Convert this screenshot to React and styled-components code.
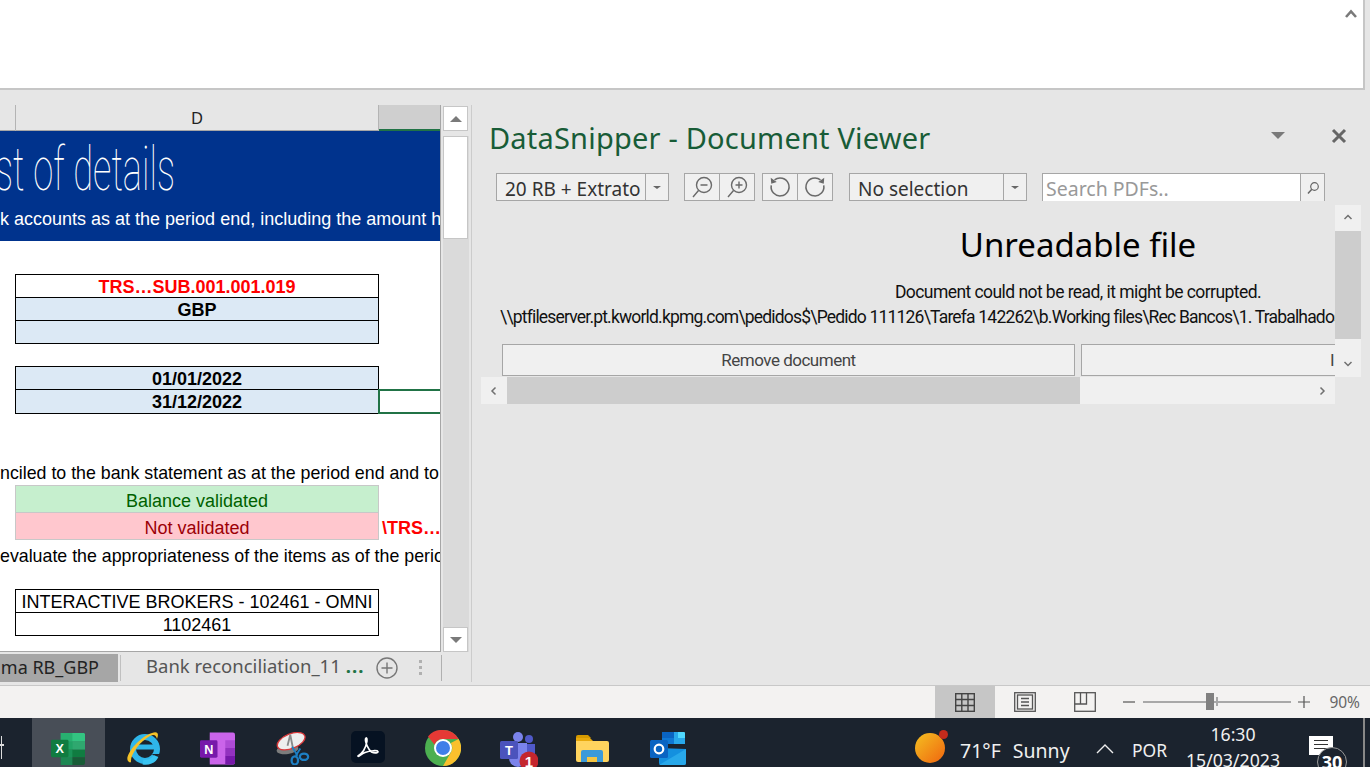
import React from 'react';
import styled, { createGlobalStyle } from 'styled-components';

const GlobalStyle = createGlobalStyle`
  html, body { margin: 0; padding: 0; height: 767px; overflow: hidden; background: #e6e6e6; }
  * { box-sizing: border-box; }
`;

const Page = styled.div`
  width: 1370px;
  height: 767px;
  display: flex;
  flex-direction: column;
  overflow: hidden;
  font-family: "Noto Sans", sans-serif;
`;

const Ribbon = styled.div`
  height: 90px;
  width: 1365px;
  flex: none;
  background: #fff;
  border-bottom: 2px solid #c6c6c6;
  border-right: 2px solid #c6c6c6;
  display: flex;
  justify-content: flex-end;
  padding: 9px 6px 0 0;
  line-height: 0;
`;

const Main = styled.div`
  flex: 1;
  min-height: 0;
  display: flex;
  background: #e6e6e6;
`;

const ExcelPane = styled.div`
  width: 472px;
  flex: none;
  margin: 15px 0 3px;
  display: grid;
  grid-template-columns: 441px 1fr;
  grid-template-rows: 1fr 30px;
  border-right: 1px solid #cccccc;
`;

const SheetArea = styled.div`
  display: flex;
  flex-direction: column;
  min-width: 0;
  overflow: hidden;
  border-right: 1px solid #a6a6a6;
  border-bottom: 1px solid #a6a6a6;
`;

const ColHeader = styled.div`
  height: 26px;
  flex: none;
  display: grid;
  grid-template-columns: 15px 363px 1fr;
  border-bottom: 1px solid #a6a6a6;
`;

const ColCell = styled.div`
  font: 16px/28px "Liberation Sans", sans-serif;
  text-align: center;
  color: #222;
  border-left: ${p => (p.$lined ? '1px solid #b4b4b4' : '0')};
  background: ${p => (p.$active ? '#cfcfcf' : 'transparent')};
  box-shadow: ${p => (p.$active ? 'inset 0 -2px 0 #217346' : 'none')};
  height: 26px;
`;

const Sheet = styled.div`
  flex: 1;
  min-height: 0;
  background: #fff;
  overflow: hidden;
  font: 18px/23px "Liberation Sans", sans-serif;
  color: #000;
`;

const Banner = styled.div`
  height: 110px;
  background: #00338d;
  color: #fff;
  overflow: hidden;
`;

const BannerTitle = styled.div`
  height: 70px;
  font: 100 62px/76px "Roboto", sans-serif;
  white-space: nowrap;
  transform: scaleX(0.585);
  transform-origin: left top;
  margin-left: -5px;
`;

const BannerLine = styled.div`
  font: 18px/36px "Liberation Sans", sans-serif;
  white-space: nowrap;
`;

const Row = styled.div`
  display: grid;
  grid-template-columns: 15px 364px 1fr;
  height: ${p => p.$h || 23}px;
  margin-top: ${p => p.$top || 0}px;
`;

const Cell = styled.div`
  grid-column: 2;
  text-align: center;
  white-space: nowrap;
  overflow: hidden;
  background: ${p => p.$bg || '#fff'};
  color: ${p => p.$color || '#000'};
  font-weight: ${p => (p.$bold ? 700 : 400)};
  border: 1px solid ${p => p.$line || '#000'};
  border-top-width: ${p => (p.$first ? 1 : 0)}px;
  line-height: ${p => p.$lh || 24}px;
`;

const Selected = styled.div`
  grid-column: 3;
  border: 2px solid #217346;
  border-right: 0;
  margin-left: -1px;
  margin-top: -1px;
  height: 25px;
`;

const Overflowing = styled.div`
  grid-column: 3;
  color: #f00;
  font-weight: 700;
  white-space: nowrap;
  overflow: hidden;
  padding-left: 3px;
  line-height: 31px;
`;

const TextLine = styled.div`
  height: 23px;
  margin-top: ${p => p.$top || 0}px;
  font-size: 17.8px;
  line-height: 25px;
  white-space: nowrap;
  overflow: hidden;
`;

const VScroll = styled.div`
  grid-row: 1;
  grid-column: 2;
  padding: 1px 3px 0 2px;
  display: flex;
  flex-direction: column;
  gap: 5px;
`;

const VTrack = styled.div`
  flex: 1;
  width: 26px;
  background: #dadada;
  display: flex;
  flex-direction: column;
`;

const TrackGap = styled.div`
  flex: 1;
`;

const ScrollBtn = styled.div`
  width: 25px;
  height: 25px;
  flex: none;
  background: #fff;
  border: 1px solid #c6c6c6;
  display: flex;
  align-items: center;
  justify-content: center;
`;

const Thumb = styled.div`
  width: 25px;
  height: 103px;
  background: #fff;
  border: 1px solid #c6c6c6;
`;

const Triangle = styled.span`
  width: 0;
  height: 0;
  border-left: ${p => p.$s || 6}px solid transparent;
  border-right: ${p => p.$s || 6}px solid transparent;
  border-top: ${p => (p.$up ? 0 : `${p.$t || 6}px solid ${p.$c || '#7a7a7a'}`)};
  border-bottom: ${p => (p.$up ? `${p.$t || 6}px solid ${p.$c || '#7a7a7a'}` : 0)};
`;

const Tabs = styled.div`
  grid-row: 2;
  grid-column: 1 / 3;
  display: flex;
  align-items: flex-start;
`;

const ActiveTab = styled.div`
  width: 118px;
  height: 28px;
  background: #a6a6a6;
  color: #222;
  font: 18px/26px "Noto Sans", sans-serif;
  text-align: right;
  padding-right: 19px;
  white-space: nowrap;
  overflow: hidden;
  margin-top: 2px;
`;

const TabSep = styled.div`
  width: 1px;
  height: 26px;
  background: #c0c0c0;
  margin: 3px 0 0 2px;
`;

const Tab = styled.div`
  margin-left: 25px;
  width: 216px;
  font: 18.5px/26px "Noto Sans", sans-serif;
  color: #555;
  white-space: nowrap;
  padding-top: 1px;
  display: flex;
  gap: 5px;
`;

const Dots = styled.b`
  color: #217346;
  letter-spacing: 1px;
`;

const TabAdd = styled.div`
  margin: 5px 0 0 14px;
  line-height: 0;
`;

const VDots = styled.div`
  margin: 8px 0 0 21px;
  display: flex;
  flex-direction: column;
  gap: 3px;
  span { width: 3px; height: 3px; background: #b0b0b0; display: block; }
`;

const TabEnd = styled.div`
  width: 1px;
  height: 26px;
  background: #b0b0b0;
  margin: 3px 0 0 19px;
`;

const Viewer = styled.div`
  flex: 1;
  min-width: 0;
  display: flex;
  flex-direction: column;
  padding-top: 25px;
`;

const ViewerHead = styled.div`
  height: 45px;
  flex: none;
  display: flex;
  align-items: center;
  padding: 0 23px 0 17px;
  margin-top: -2px;
`;

const ViewerTitle = styled.div`
  flex: 1;
  font: 29px/40px "Noto Sans", sans-serif;
  padding-top: 4px;
  color: #185c37;
  letter-spacing: 0.2px;
`;

const HeadBtns = styled.div`
  display: flex;
  align-items: center;
  gap: 46px;
`;

const Toolbar = styled.div`
  display: flex;
  align-items: flex-start;
  height: 28px;
  padding-left: 24px;
  margin-top: 15px;
  flex: none;
`;

const Combo = styled.div`
  width: ${p => p.$w}px;
  height: 28px;
  margin-left: ${p => p.$ml || 0}px;
  display: flex;
  background: #f0f0f0;
  border: 1px solid #a6a6a6;
  font: 19px/31px "Noto Sans", sans-serif;
  color: #333;
  white-space: nowrap;
`;

const ComboText = styled.div`
  flex: 1;
  padding-left: 8px;
  overflow: hidden;
`;

const ComboArrow = styled.div`
  width: 23px;
  flex: none;
  border-left: 1px solid #a6a6a6;
  display: flex;
  align-items: center;
  justify-content: center;
`;

const IconGroup = styled.div`
  display: flex;
  margin-left: ${p => p.$ml}px;
`;

const IconBtn = styled.div`
  width: 36px;
  height: 28px;
  background: #f0f0f0;
  border: 1px solid #a6a6a6;
  margin-left: ${p => (p.$joined ? -1 : 0)}px;
  display: flex;
  align-items: center;
  justify-content: center;
`;

const Search = styled.div`
  width: 283px;
  height: 28px;
  margin-left: 15px;
  display: flex;
  background: #fff;
  border: 1px solid #a6a6a6;
  border-bottom: 0;
  font: 19.5px/29px "Noto Sans", sans-serif;
  color: #999;
`;

const SearchText = styled.div`
  flex: 1;
  padding-left: 3px;
`;

const SearchBtn = styled.div`
  width: 24px;
  background: #f0f0f0;
  border-left: 1px solid #a6a6a6;
  display: flex;
  align-items: center;
  justify-content: center;
`;

const DocPane = styled.div`
  width: 888px;
  height: 199px;
  margin: 4px 0 0 9px;
  display: grid;
  grid-template-columns: 854px 1fr;
  grid-template-rows: 1fr 27px;
  overflow: hidden;
`;

const DocBody = styled.div`
  overflow: hidden;
  text-align: center;
  color: #111;
`;

const DocTitle = styled.div`
  font: 33px/44px "Noto Sans", sans-serif;
  color: #000;
  margin-top: 18px;
  width: 1194px;
`;

const DocLine = styled.div`
  font: 17.5px/26px "Roboto", sans-serif;
  letter-spacing: -0.56px;
  width: 1194px;
  white-space: nowrap;
  margin-top: ${p => p.$top || 0}px;
`;

const PathLine = styled(DocLine)`
  text-align: left;
  padding-left: 19px;
  letter-spacing: -0.81px;
  line-height: 25px;
`;

const DocButtons = styled.div`
  display: flex;
  gap: 6px;
  margin: 14px 0 0 21px;
  width: 1200px;
`;

const DocButton = styled.div`
  width: ${p => p.$w}px;
  height: 32px;
  background: #f0f0f0;
  border: 1px solid #a6a6a6;
  font: 17px/30px "Roboto", sans-serif;
  letter-spacing: -0.5px;
  color: #444;
  text-align: ${p => p.$align || 'center'};
  padding-left: ${p => p.$pl || 0}px;
`;

const DocVScroll = styled.div`
  background: #f0f0f0;
  display: flex;
  flex-direction: column;
  align-items: center;
  width: 26px;
`;

const DocVBtn = styled.div`
  height: 26px;
  width: 100%;
  flex: none;
  display: flex;
  align-items: center;
  justify-content: center;
`;

const DocVThumb = styled.div`
  height: 108px;
  width: 100%;
  flex: none;
  background: #cdcdcd;
`;

const DocHScroll = styled.div`
  display: flex;
  background: #f0f0f0;
  align-items: stretch;
`;

const DocHBtn = styled.div`
  width: 26px;
  flex: none;
  display: flex;
  align-items: center;
  justify-content: center;
`;

const DocHThumb = styled.div`
  width: 573px;
  background: #cdcdcd;
  flex: none;
`;

const StatusBar = styled.div`
  height: 33px;
  flex: none;
  background: #f3f2f1;
  border-top: 1px solid #c8c8c8;
  display: flex;
  align-items: center;
  justify-content: flex-end;
  padding-right: 10px;
`;

const ViewBtn = styled.div`
  width: 60px;
  height: 32px;
  background: ${p => (p.$on ? '#c6c6c6' : 'transparent')};
  display: flex;
  align-items: center;
  justify-content: center;
`;

const ZoomBar = styled.div`
  display: flex;
  align-items: center;
  margin-left: 8px;
  width: 192px;
  color: #555;
`;

const ZoomTrack = styled.div`
  position: relative;
  width: 148px;
  height: 2px;
  background: #a8a8a8;
  margin: 0 7px 0 8px;
`;

const ZoomThumb = styled.span`
  position: absolute;
  left: 63px;
  top: -8px;
  width: 8px;
  height: 17px;
  background: #808080;
`;

const ZoomTick = styled.span`
  position: absolute;
  left: 73px;
  top: -4px;
  width: 2px;
  height: 9px;
  background: #a8a8a8;
`;

const ZoomValue = styled.div`
  font: 15.5px/20px "Noto Sans", sans-serif;
  color: #666;
  margin-left: 14px;
`;

const Taskbar = styled.div`
  height: 49px;
  flex: none;
  background: #1b232e;
  display: flex;
  align-items: flex-start;
  overflow: hidden;
  color: #f0f0f0;
`;

const TaskEdge = styled.div`
  width: 32px;
  height: 49px;
  flex: none;
  padding: 18px 0 0 1px;
`;

const EdgeGlyph = styled.span`
  position: relative;
  display: block;
  width: 1px;
  height: 23px;
  background: #ddd;
  &::after {
    content: '';
    position: absolute;
    left: -1px;
    top: 8px;
    width: 4px;
    height: 2px;
    background: #ddd;
  }
`;

const TaskIcons = styled.div`
  display: flex;
`;

const TaskIcon = styled.div`
  width: ${p => (p.$on ? 73 : 75)}px;
  height: 49px;
  padding-top: ${p => p.$pt ?? 14}px;
  display: flex;
  justify-content: center;
  background: ${p => (p.$on ? '#484e57' : 'transparent')};
`;

const Tray = styled.div`
  margin-left: auto;
  display: flex;
  align-items: flex-start;
  height: 49px;
  font: 19.5px/26px "Noto Sans", sans-serif;
`;

const Sun = styled.div`
  position: relative;
  margin-top: 15px;
  width: 30px;
  height: 30px;
  border-radius: 50%;
  background: linear-gradient(135deg, #f4c021, #f0650f);
`;

const SunDot = styled.span`
  position: absolute;
  right: -3px;
  top: -3px;
  width: 9px;
  height: 9px;
  border-radius: 50%;
  background: #c42b1c;
`;

const Weather = styled.div`
  margin: 20px 0 0 15px;
  display: flex;
  gap: 12px;
  width: 136px;
`;

const Chevron = styled.div`
  width: 28px;
  margin-top: 25px;
  line-height: 0;
`;

const Lang = styled.div`
  margin: 19px 0 0 8px;
  width: 51px;
  font-size: 17.5px;
`;

const Clock = styled.div`
  width: 100px;
  text-align: center;
  font-size: 17.7px;
  line-height: 26px;
  margin-top: 3px;
`;

const Notify = styled.div`
  position: relative;
  margin: 18px 0 0 26px;
  width: 24px;
  height: 19px;
  background: #fff;
`;

const NotifyLines = styled.div`
  display: flex;
  flex-direction: column;
  gap: 3px;
  padding: 4px 5px 0;
  span { display: block; height: 1px; background: #333; }
`;

const NotifyBadge = styled.div`
  position: absolute;
  left: 8px;
  top: 11px;
  width: 30px;
  height: 30px;
  border-radius: 50%;
  background: #1b232e;
  border: 1px solid #999;
  font: 700 18px/28px "Noto Sans", sans-serif;
  text-align: center;
  color: #fff;
`;

const DesktopEdge = styled.div`
  width: 2px;
  height: 49px;
  background: #888;
  margin: 0 5px 0 30px;
`;

const ZoomOutIcon = () => (
  <svg width="24" height="24" viewBox="0 0 24 24" fill="none" stroke="#6a6a6a" strokeWidth="1.4">
    <circle cx="14" cy="10" r="7.5" />
    <path d="M8.5 15.5 3 22M10.500 10h7" />
  </svg>
);

const ZoomInIcon = () => (
  <svg width="24" height="24" viewBox="0 0 24 24" fill="none" stroke="#6a6a6a" strokeWidth="1.4">
    <circle cx="14" cy="10" r="7.5" />
    <path d="M8.5 15.5 3 22M10.500 10h7M14 6.500v7" />
  </svg>
);

const RotateLeft = () => (
  <svg width="24" height="24" viewBox="0 0 22 22" fill="none" stroke="#6a6a6a" strokeWidth="1.4">
    <path d="M6 4.500a8.200 8.200 0 1 1-3 5" />
    <path d="M2.500 2.500 3 8l5-1.500z" fill="#6a6a6a" stroke="none" />
  </svg>
);

const RotateRight = () => (
  <svg width="24" height="24" viewBox="0 0 22 22" fill="none" stroke="#6a6a6a" strokeWidth="1.4">
    <path d="M16 4.500a8.200 8.200 0 1 0 3 5" />
    <path d="M19.500 2.500 19 8l-5-1.500z" fill="#6a6a6a" stroke="none" />
  </svg>
);

const SearchIcon = () => (
  <svg width="14" height="14" viewBox="0 0 14 14" fill="none" stroke="#666" strokeWidth="1.2">
    <circle cx="8.500" cy="5.500" r="3.800" />
    <path d="M5.800 8.300 2 12.500" strokeWidth="1.500" />
  </svg>
);

const Caret = ({ dir }) => {
  const paths = { up: 'M1.500 6 5 2.500 8.500 6', down: 'M1.500 3 5 6.500 8.500 3', left: 'M6.500 1.500 3 5l3.500 3.500', right: 'M3.500 1.500 7 5 3.500 8.500' };
  return (
    <svg width="10" height="10" viewBox="0 0 10 10" fill="none" stroke="#707070" strokeWidth="1.500">
      <path d={paths[dir]} />
    </svg>
  );
};

const ExcelLogo = () => (
  <svg width="35" height="33" viewBox="0 0 36 34">
    <path d="M10 1h24a2 2 0 0 1 1 1v8H10z" fill="#33c481" />
    <path d="M10 10h25v8H10z" fill="#21a366" />
    <path d="M10 18h25v8H10z" fill="#107c41" />
    <path d="M22 10h13v8H22z" fill="#2fa86f" />
    <path d="M10 26h25v6a2 2 0 0 1-2 2H10z" fill="#185c37" />
    <path d="M10 1h12v33H10z" fill="#21a366" opacity=".6" />
    <rect x="0" y="8" width="18" height="18" rx="1.500" fill="#107c41" />
    <text x="9" y="22" fontSize="13" fontWeight="700" fill="#fff" textAnchor="middle" fontFamily="Liberation Sans">X</text>
  </svg>
);

const IeLogo = () => (
  <svg width="36" height="36" viewBox="0 0 36 36" fill="none">
    <circle cx="20" cy="19" r="12" stroke="#2fb6ea" strokeWidth="6" />
    <path d="M9 17h22" stroke="#2fb6ea" strokeWidth="5" />
    <path d="M27 24h8l-4 5z" fill="#1b232e" />
    <path d="M31 26c-2 5-8 7-13 6" stroke="#39c4f2" strokeWidth="5" />
    <path d="M3 31C-1 26 14 7 27 3c6-2 7 1 5 6-1-4-3-5-7-3C15 11 5 25 6 32c-1 1-2 0-3-1z" fill="#f5c228" />
  </svg>
);

const OneNoteLogo = () => (
  <svg width="35" height="33" viewBox="0 0 36 33">
    <path d="M10 0h24a2 2 0 0 1 2 2v29a2 2 0 0 1-2 2H10z" fill="#ca64ea" />
    <path d="M26 8h10v8H26z" fill="#ae4bd5" />
    <path d="M26 16h10v8H26z" fill="#9332bf" />
    <path d="M26 24h10v7a2 2 0 0 1-2 2h-8z" fill="#7719aa" />
    <rect x="0" y="8" width="18" height="18" rx="1.500" fill="#7719aa" />
    <text x="9" y="22" fontSize="13" fontWeight="700" fill="#fff" textAnchor="middle" fontFamily="Liberation Sans">N</text>
  </svg>
);

const SnipLogo = () => (
  <svg width="34" height="33" viewBox="0 0 36 36" fill="none">
    <ellipse cx="12" cy="19" rx="12" ry="5" transform="rotate(-8 12 19)" fill="#7c7c7c" />
    <ellipse cx="16" cy="10" rx="16" ry="8" transform="rotate(-22 16 10)" fill="#eeeeee" stroke="#d8383a" strokeWidth="1.500" />
    <path d="M15 3l3 15M15 3l-3 12" stroke="#8a8a8a" strokeWidth="2" />
    <path d="M17 16l6 10M26 18l-5 8" stroke="#1d7fc4" strokeWidth="2" />
    <ellipse cx="20" cy="31" rx="3.500" ry="4.500" stroke="#1d7fc4" strokeWidth="2.500" />
    <ellipse cx="30" cy="27" rx="4.500" ry="3.500" stroke="#1d7fc4" strokeWidth="2.500" />
  </svg>
);

const AcrobatLogo = () => (
  <svg width="34" height="32" viewBox="0 0 34 32" fill="none">
    <rect width="34" height="32" rx="5" fill="#061222" />
    <path d="M7 25c5-3 8-9 9-15 .3-3-1-4-1.500-2-.6 3 3 11 6 13 3 1.500 7 1 6.500-.5-.5-1.500-8-1-13 1-4 1.500-7 5-7 3.500z" stroke="#fff" strokeWidth="1.600" />
  </svg>
);

const ChromeLogo = () => (
  <svg width="36" height="36" viewBox="0 0 36 36">
    <circle cx="18" cy="18" r="18" fill="#4caf50" />
    <path d="M18 0a18 18 0 0 1 15.600 9H18a9 9 0 0 0-8.400 5.700L3 6.500A18 18 0 0 1 18 0z" fill="#e53935" />
    <path d="M33.600 9A18 18 0 0 1 18 36l7.800-13.500A9 9 0 0 0 25.800 13z" fill="#fbc02d" />
    <circle cx="18" cy="18" r="9" fill="#fff" />
    <circle cx="18" cy="18" r="7" fill="#3f7fe8" />
  </svg>
);

const TeamsLogo = () => (
  <svg width="40" height="38" viewBox="-2 0 40 38">
    <circle cx="29" cy="7" r="4" fill="#5059c9" />
    <circle cx="18" cy="5" r="5" fill="#7b83eb" />
    <path d="M24 12h11v13a6 6 0 0 1-11 2z" fill="#5059c9" />
    <path d="M9 11h18v15a9 9 0 0 1-18 0z" fill="#7b83eb" />
    <rect x="0" y="9" width="18" height="18" rx="1.500" fill="#4b53bc" />
    <text x="9" y="23" fontSize="13" fontWeight="700" fill="#fff" textAnchor="middle" fontFamily="Liberation Sans">T</text>
    <circle cx="29" cy="29" r="9.500" fill="#c4262e" />
    <text x="29" y="35" fontSize="15" fontWeight="700" fill="#fff" textAnchor="middle" fontFamily="Liberation Sans">1</text>
  </svg>
);

const FolderLogo = () => (
  <svg width="33" height="27" viewBox="0 0 33 27">
    <path d="M0 2a2 2 0 0 1 2-2h10l3 3h-15z" fill="#d69a00" />
    <path d="M0 3h14l3 3H0z" fill="#e8a90c" />
    <path d="M0 6h31a2 2 0 0 1 2 2v17a2 2 0 0 1-2 2H2a2 2 0 0 1-2-2z" fill="#ffd45e" />
    <path d="M5 27V17a2 2 0 0 1 2-2h18a2 2 0 0 1 2 2v10h-6v-5H11v5z" fill="#3b9ad9" />
    <path d="M11 22h10v5H11z" fill="#f5c542" />
  </svg>
);

const OutlookLogo = () => (
  <svg width="36" height="33" viewBox="0 0 36 33">
    <path d="M12 0h22v11H12z" fill="#0a64c2" />
    <path d="M24 0h10v6H24z" fill="#28a8ea" />
    <path d="M28 0h6a1 1 0 0 1 1 1v5h-7z" fill="#50d9ff" />
    <path d="M24 6h11v6H24z" fill="#28a8ea" />
    <path d="M12 6h12v6H12z" fill="#0f78d4" />
    <path d="M9 16 36 17v14a2 2 0 0 1-2 2H11a2 2 0 0 1-2-2z" fill="#1490df" />
    <path d="M9 33 36 17v14a2 2 0 0 1-2 2z" fill="#28a8ea" />
    <rect x="0" y="8" width="18" height="18" rx="1.500" fill="#0a64c2" />
    <circle cx="9" cy="17" r="4.300" fill="none" stroke="#fff" strokeWidth="2.200" />
  </svg>
);

const NormalViewIcon = () => (
  <svg width="20" height="19" viewBox="0 0 20 19" fill="none" stroke="#444" strokeWidth="1.400">
    <rect x=".7" y=".7" width="18.600" height="17.600" />
    <path d="M.7 6.500h18.600M.7 12.500h18.600M6.800.7v17.600M13 .7v17.600" />
  </svg>
);

const PageLayoutIcon = () => (
  <svg width="22" height="20" viewBox="0 0 22 20" fill="none" stroke="#555" strokeWidth="1.300">
    <rect x=".7" y=".7" width="20.600" height="18.600" />
    <rect x="3.500" y="3" width="15" height="14" />
    <path d="M7 6.500h8M7 10h8M7 13.500h8" />
  </svg>
);

const PageBreakIcon = () => (
  <svg width="22" height="20" viewBox="0 0 22 20" fill="none" stroke="#555" strokeWidth="1.300">
    <rect x=".7" y=".7" width="20.600" height="18.600" />
    <path d="M.7 12h11.800V.7M6.500.7V12" />
  </svg>
);

export default function App() {
  return (
    <Page>
      <GlobalStyle />
      <Ribbon>
        <svg width="12" height="9" viewBox="0 0 12 9" fill="none" stroke="#7a7a7a" strokeWidth="2.600">
          <path d="M1 8 6 2.500 11 8" />
        </svg>
      </Ribbon>
      <Main>
        <ExcelPane>
          <SheetArea>
            <ColHeader>
              <ColCell />
              <ColCell $lined>D</ColCell>
              <ColCell $lined $active />
            </ColHeader>
            <Sheet>
              <Banner>
                <BannerTitle>st of details</BannerTitle>
                <BannerLine>k accounts as at the period end, including the amount held</BannerLine>
              </Banner>
              <Row $top={33} $h={24}>
                <Cell $first $bold $color="#f00">TRS…SUB.001.001.019</Cell>
              </Row>
              <Row>
                <Cell $bold $bg="#dce9f5">GBP</Cell>
              </Row>
              <Row>
                <Cell $bg="#dce9f5" />
              </Row>
              <Row $top={22} $h={24}>
                <Cell $first $bold $bg="#dce9f5">01/01/2022</Cell>
              </Row>
              <Row>
                <Cell $bold $bg="#dce9f5">31/12/2022</Cell>
                <Selected />
              </Row>
              <TextLine $top={48}>nciled to the bank statement as at the period end and to reconcile</TextLine>
              <Row $h={28} $top={1}>
                <Cell $first $bg="#c6efce" $color="#006100" $line="#c8c8c8" $lh={31}>Balance validated</Cell>
              </Row>
              <Row $h={27}>
                <Cell $bg="#ffc7ce" $color="#9c0006" $line="#c8c8c8" $lh={31}>Not validated</Cell>
                <Overflowing>\TRS…</Overflowing>
              </Row>
              <TextLine $top={4}>evaluate the appropriateness of the items as of the period end</TextLine>
              <Row $top={22} $h={24}>
                <Cell $first>INTERACTIVE BROKERS - 102461 - OMNI</Cell>
              </Row>
              <Row>
                <Cell>1102461</Cell>
              </Row>
            </Sheet>
          </SheetArea>
          <VScroll>
            <ScrollBtn><Triangle $up /></ScrollBtn>
            <VTrack>
              <Thumb />
              <TrackGap />
              <ScrollBtn><Triangle /></ScrollBtn>
            </VTrack>
          </VScroll>
          <Tabs>
            <ActiveTab>ma RB_GBP</ActiveTab>
            <TabSep />
            <Tab>Bank reconciliation_11 <Dots>...</Dots></Tab>
            <TabAdd>
              <svg width="22" height="22" viewBox="0 0 22 22" fill="none" stroke="#777" strokeWidth="1.400">
                <circle cx="11" cy="11" r="10" />
                <path d="M11 5.500v11M5.500 11h11" />
              </svg>
            </TabAdd>
            <VDots><span /><span /><span /></VDots>
            <TabEnd />
          </Tabs>
        </ExcelPane>
        <Viewer>
          <ViewerHead>
            <ViewerTitle>DataSnipper - Document Viewer</ViewerTitle>
            <HeadBtns>
              <Triangle $s={7} $t={7} />
              <svg width="16" height="16" viewBox="0 0 16 16" stroke="#666" strokeWidth="3">
                <path d="M2 2l12 12M14 2 2 14" />
              </svg>
            </HeadBtns>
          </ViewerHead>
          <Toolbar>
            <Combo $w={173}>
              <ComboText>20 RB + Extrato</ComboText>
              <ComboArrow><Triangle $s={4} $t={3} $c="#666" /></ComboArrow>
            </Combo>
            <IconGroup $ml={15}>
              <IconBtn><ZoomOutIcon /></IconBtn>
              <IconBtn $joined><ZoomInIcon /></IconBtn>
            </IconGroup>
            <IconGroup $ml={7}>
              <IconBtn><RotateLeft /></IconBtn>
              <IconBtn $joined><RotateRight /></IconBtn>
            </IconGroup>
            <Combo $w={178} $ml={16}>
              <ComboText>No selection</ComboText>
              <ComboArrow><Triangle $s={4} $t={3} $c="#666" /></ComboArrow>
            </Combo>
            <Search>
              <SearchText>Search PDFs..</SearchText>
              <SearchBtn><SearchIcon /></SearchBtn>
            </Search>
          </Toolbar>
          <DocPane>
            <DocBody>
              <DocTitle>Unreadable file</DocTitle>
              <DocLine $top={12}>Document could not be read, it might be corrupted.</DocLine>
              <PathLine>\\ptfileserver.pt.kworld.kpmg.com\pedidos$\Pedido 111126\Tarefa 142262\b.Working files\Rec Bancos\1. Trabalhados\20 RB + Extrato.pdf</PathLine>
              <DocButtons>
                <DocButton $w={573}>Remove document</DocButton>
                <DocButton $w={400} $align="left" $pl={248}>I</DocButton>
              </DocButtons>
            </DocBody>
            <DocVScroll>
              <DocVBtn><Caret dir="up" /></DocVBtn>
              <DocVThumb />
              <TrackGap />
              <DocVBtn><Caret dir="down" /></DocVBtn>
            </DocVScroll>
            <DocHScroll>
              <DocHBtn><Caret dir="left" /></DocHBtn>
              <DocHThumb />
              <TrackGap />
              <DocHBtn><Caret dir="right" /></DocHBtn>
            </DocHScroll>
          </DocPane>
        </Viewer>
      </Main>
      <StatusBar>
        <ViewBtn $on><NormalViewIcon /></ViewBtn>
        <ViewBtn><PageLayoutIcon /></ViewBtn>
        <ViewBtn><PageBreakIcon /></ViewBtn>
        <ZoomBar>
          <svg width="12" height="12" viewBox="0 0 12 12" stroke="#555" strokeWidth="1.200"><path d="M0 6h12" /></svg>
          <ZoomTrack>
            <ZoomThumb />
            <ZoomTick />
          </ZoomTrack>
          <svg width="12" height="12" viewBox="0 0 12 12" stroke="#555" strokeWidth="1.200"><path d="M0 6h12M6 0v12" /></svg>
        </ZoomBar>
        <ZoomValue>90%</ZoomValue>
      </StatusBar>
      <Taskbar>
        <TaskEdge><EdgeGlyph /></TaskEdge>
        <TaskIcons>
          <TaskIcon $on><ExcelLogo /></TaskIcon>
          <TaskIcon $pt={12}><IeLogo /></TaskIcon>
          <TaskIcon><OneNoteLogo /></TaskIcon>
          <TaskIcon><SnipLogo /></TaskIcon>
          <TaskIcon $pt={13}><AcrobatLogo /></TaskIcon>
          <TaskIcon $pt={12}><ChromeLogo /></TaskIcon>
          <TaskIcon><TeamsLogo /></TaskIcon>
          <TaskIcon $pt={17}><FolderLogo /></TaskIcon>
          <TaskIcon><OutlookLogo /></TaskIcon>
        </TaskIcons>
        <Tray>
          <Sun><SunDot /></Sun>
          <Weather><span>71°F</span><span>Sunny</span></Weather>
          <Chevron>
            <svg width="18" height="11" viewBox="0 0 18 11" fill="none" stroke="#eee" strokeWidth="1.400"><path d="M1 10 9 2l8 8" /></svg>
          </Chevron>
          <Lang>POR</Lang>
          <Clock>16:30<br />15/03/2023</Clock>
          <Notify>
            <NotifyLines><span /><span /><span /></NotifyLines>
            <NotifyBadge>30</NotifyBadge>
          </Notify>
          <DesktopEdge />
        </Tray>
      </Taskbar>
    </Page>
  );
}
